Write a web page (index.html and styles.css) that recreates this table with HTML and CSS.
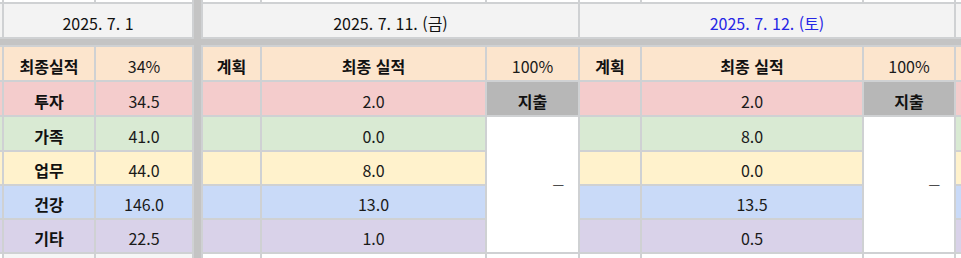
FILE: index.html
```html
<!DOCTYPE html>
<html lang="ko">
<head>
<meta charset="utf-8">
<link rel="stylesheet" href="styles.css">
</head>
<body>
<div class="sheet">
  <div class="vbar"></div>
  <div class="hbar"></div>

  <div class="c top"></div><div class="c top"></div><div class="c top"></div><div class="c top"></div><div class="c top"></div>
  <div class="c top"></div><div class="c top"></div><div class="c top"></div><div class="c top"></div><div class="c top"></div>

  <div class="c date"></div>
  <div class="c date span2">2025. 7. 1</div>
  <div class="c date span3">2025. 7. 11. (금)</div>
  <div class="c date span3 blue">2025. 7. 12. (토)</div>
  <div class="c date"></div>

  <div class="c hd"></div>
  <div class="c hd b">최종실적</div>
  <div class="c hd">34%</div>
  <div class="c hd b">계획</div>
  <div class="c hd b">최종 실적</div>
  <div class="c hd">100%</div>
  <div class="c hd b">계획</div>
  <div class="c hd b">최종 실적</div>
  <div class="c hd">100%</div>
  <div class="c hd"></div>

  <div class="c red"></div>
  <div class="c red b">투자</div>
  <div class="c red">34.5</div>
  <div class="c red"></div>
  <div class="c red">2.0</div>
  <div class="c gray b">지출</div>
  <div class="c red"></div>
  <div class="c red">2.0</div>
  <div class="c gray b">지출</div>
  <div class="c red"></div>

  <div class="c green"></div>
  <div class="c green b">가족</div>
  <div class="c green">41.0</div>
  <div class="c green"></div>
  <div class="c green">0.0</div>
  <div class="c dash">—</div>
  <div class="c green"></div>
  <div class="c green">8.0</div>
  <div class="c dash">—</div>
  <div class="c green"></div>

  <div class="c yellow"></div>
  <div class="c yellow b">업무</div>
  <div class="c yellow">44.0</div>
  <div class="c yellow"></div>
  <div class="c yellow">8.0</div>
  <div class="c yellow"></div>
  <div class="c yellow">0.0</div>
  <div class="c yellow"></div>

  <div class="c blue-bg"></div>
  <div class="c blue-bg b">건강</div>
  <div class="c blue-bg">146.0</div>
  <div class="c blue-bg"></div>
  <div class="c blue-bg">13.0</div>
  <div class="c blue-bg"></div>
  <div class="c blue-bg">13.5</div>
  <div class="c blue-bg"></div>

  <div class="c purple"></div>
  <div class="c purple b">기타</div>
  <div class="c purple">22.5</div>
  <div class="c purple"></div>
  <div class="c purple">1.0</div>
  <div class="c purple"></div>
  <div class="c purple">0.5</div>
  <div class="c purple"></div>

  <div class="c bot"></div><div class="c bot-l"></div><div class="c bot-l"></div><div class="c bot"></div><div class="c bot"></div>
  <div class="c bot"></div><div class="c bot"></div><div class="c bot"></div><div class="c bot"></div><div class="c bot"></div>
</div>
</body>
</html>
```
FILE: styles.css
```css
html, body {
  margin: 0;
  padding: 0;
  background: #ffffff;
}

.sheet {
  display: grid;
  width: 961px;
  height: 258px;
  overflow: hidden;
  grid-template-columns: 2px 90px 96px 7px 57px 223px 91px 60px 220px 90px 6px;
  grid-template-rows: 2px 33px 6px 33px 33px 33px 32px 32px 32px 5px;
  gap: 2px;
  background: #cfd1d3;
  font-family: "Noto Sans CJK KR", "Noto Sans", sans-serif;
  color: #1a1a1a;
}

.vbar {
  grid-column: 4;
  grid-row: 1 / -1;
  background: #c4c4c4;
}

.hbar {
  grid-column: 1 / -1;
  grid-row: 3;
  background: #c4c4c4;
}

.c {
  display: flex;
  align-items: center;
  justify-content: center;
  font-size: 16px;
  line-height: 20px;
  padding-top: 4px;
  box-sizing: border-box;
  white-space: nowrap;
  overflow: hidden;
}

.b {
  font-weight: 700;
  color: #111111;
}

.top { background: #ffffff; padding: 0; }
.date { background: #f3f3f3; font-size: 16px; color: #111111; }
.span2 { grid-column: span 2; }
.span3 { grid-column: span 3; }
.blue { color: #2626e6; }

.hd { background: #fce5cd; }
.red { background: #f4cccc; }
.green { background: #d9ead3; }
.yellow { background: #fff2cc; }
.blue-bg { background: #c9daf8; }
.purple { background: #d9d2e9; }
.gray { background: #b7b7b7; }

.dash {
  grid-row: span 4;
  background: #ffffff;
  justify-content: flex-end;
  padding: 0 14px 2px 0;
  font-size: 13px;
}

.bot { background: #ffffff; padding: 0; }
.bot-l { background: #f6f6f6; padding: 0; }
```
